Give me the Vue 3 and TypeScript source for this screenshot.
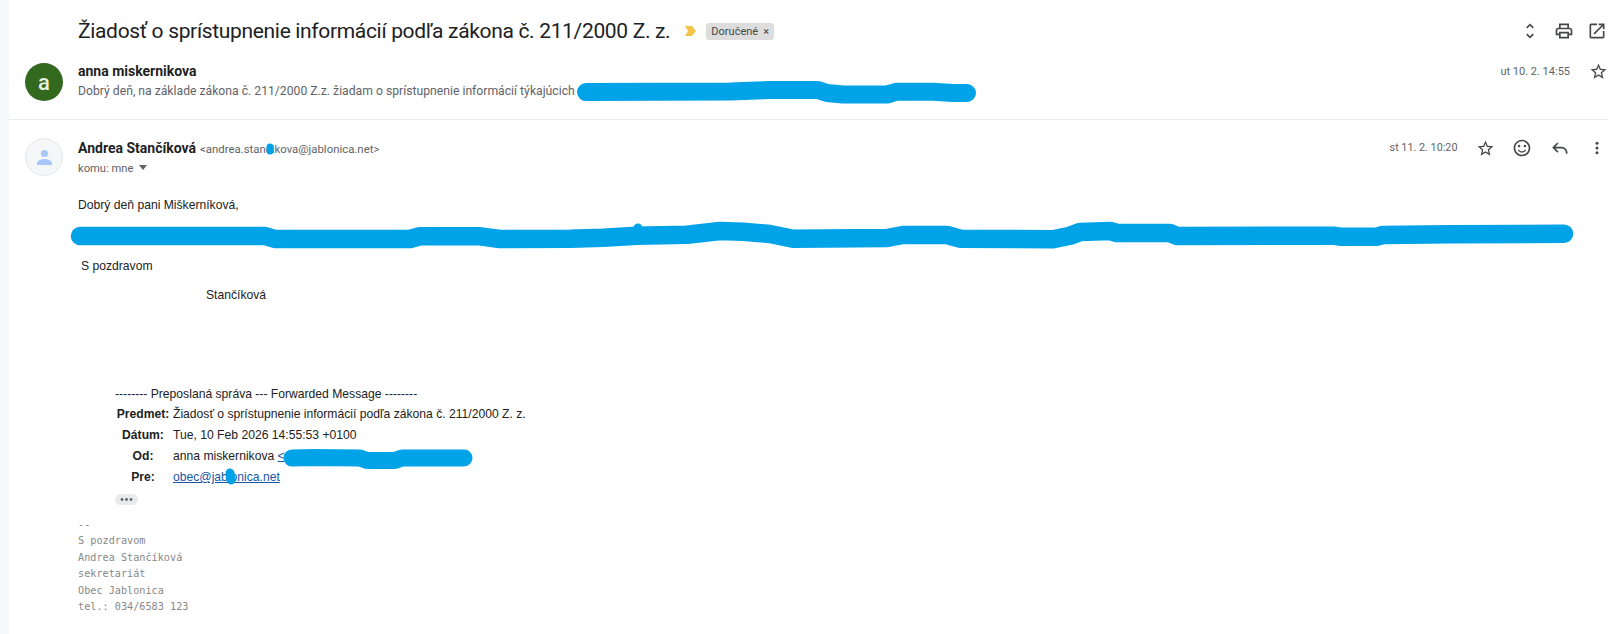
<script setup lang="ts">
// Scribbles that hide private text in the screenshot, in page coordinates
const scribbles: { d: string; w: number }[] = [
  { w: 18, d: 'M586 92L730 91.5L770 90L818 90L827 93L843 94.5L887 94.5L897 91.7L933 91.7L953 93L967 93' },
  {
    w: 18.5,
    d: 'M80 236L265 236L275 239L410 239L420 236.3L480 236.3L500 239L570 238.7L603 237.7L637 235.7L687 234.7L720 231L743 231.7L770 234L793 238.7L887 238L903 235L947 235L960 238.7L1053 239.3L1070 235.7L1080 232L1110 231L1117 233L1170 233L1177 236L1297 235.7L1333 235.7L1340 236.7L1377 236.7L1383 235L1450 234.3L1564 233.7',
  },
  { w: 9, d: 'M638 228L638 231' },
  { w: 17, d: 'M292 458L315 457.5L360 458L367 460.5L395 460.5L402 458L464 458' },
  { w: 9, d: 'M230 473L231 480' },
  { w: 7, d: 'M270 147L270 151' },
]

const forwardRows = [
  { label: 'Predmet:', value: 'Žiadosť o sprístupnenie informácií podľa zákona č. 211/2000 Z. z.' },
  { label: 'Dátum:', value: 'Tue, 10 Feb 2026 14:55:53 +0100' },
]

const signature = ['--', 'S pozdravom', 'Andrea Stančíková', 'sekretariát', 'Obec Jablonica', 'tel.: 034/6583 123']

const star =
  'M22 9.24l-7.19-.62L12 2 9.19 8.63 2 9.24l5.46 4.73L5.82 21 12 17.27 18.18 21l-1.63-7.03L22 9.24zM12 15.4l-3.76 2.27 1-4.28-3.32-2.88 4.38-.38L12 6.1l1.71 4.04 4.38.38-3.32 2.88 1 4.28L12 15.4z'
</script>

<template>
  <div class="page">
    <div class="strip"></div>
    <main class="mail">
      <header class="subject">
        <h1>Žiadosť o sprístupnenie informácií podľa zákona č. 211/2000 Z. z.</h1>
        <svg class="marker" width="11" height="10" viewBox="0 0 11 10"><path d="M0 0h7l4 5-4 5H0l3-5z" /></svg>
        <span class="label">Doručené<i>×</i></span>
        <div class="subject-tools">
          <svg width="20" height="20" viewBox="0 0 24 24"><path d="M12 5.83L15.17 9l1.41-1.41L12 3 7.41 7.59 8.83 9 12 5.83zm0 12.34L8.83 15l-1.41 1.41L12 21l4.59-4.59L15.17 15 12 18.17z" /></svg>
          <svg width="20" height="20" viewBox="0 0 24 24"><path d="M19 8h-1V3H6v5H5c-1.66 0-3 1.34-3 3v6h4v4h12v-4h4v-6c0-1.66-1.34-3-3-3zM8 5h8v3H8V5zm8 12v2H8v-4h8v2zm2-2v-2H6v2H4v-4c0-.55.45-1 1-1h14c.55 0 1 .45 1 1v4h-2z" /></svg>
          <svg width="20" height="20" viewBox="0 0 24 24"><path d="M19 19H5V5h7V3H5c-1.11 0-2 .9-2 2v14c0 1.1.89 2 2 2h14c1.1 0 2-.9 2-2v-7h-2v7zM14 3v2h3.59l-9.83 9.83 1.41 1.41L19 6.41V10h2V3h-7z" /></svg>
        </div>
      </header>

      <section class="collapsed">
        <div class="avatar avatar--green">a</div>
        <div class="collapsed-text">
          <div class="sender">anna miskernikova</div>
          <div class="snippet">Dobrý deň, na základe zákona č. 211/2000 Z.z. žiadam o sprístupnenie informácií týkajúcich</div>
        </div>
        <time class="date date--first">ut 10. 2. 14:55</time>
        <svg class="star star--first" width="19" height="19" viewBox="0 0 24 24"><path :d="star" /></svg>
      </section>

      <section class="message">
        <div class="message-head">
          <div class="avatar avatar--blank">
            <svg width="17" height="17" viewBox="0 0 17 17">
              <circle cx="8.5" cy="4.5" r="3.6" />
              <path d="M1 16v-1.6C1 11.6 5 10 8.5 10s7.5 1.6 7.5 4.4V16z" />
            </svg>
          </div>
          <div class="head-text">
            <div><span class="sender">Andrea Stančíková</span> <span class="address">&lt;andrea.stancikova@jablonica.net&gt;</span></div>
            <div class="to">komu: mne <span class="caret"></span></div>
          </div>
          <time class="date">st 11. 2. 10:20</time>
          <div class="message-tools">
            <svg width="19" height="19" viewBox="0 0 24 24"><path :d="star" /></svg>
            <svg width="20" height="20" viewBox="0 0 24 24">
              <path d="M11.99 2C6.47 2 2 6.48 2 12s4.47 10 9.99 10C17.52 22 22 17.52 22 12S17.52 2 11.99 2zM12 20c-4.42 0-8-3.58-8-8s3.58-8 8-8 8 3.58 8 8-3.58 8-8 8z" />
              <circle cx="15.5" cy="9.5" r="1.5" />
              <circle cx="8.5" cy="9.5" r="1.5" />
              <path d="M12 16c-1.48 0-2.75-.81-3.45-2H6.88c.8 2.05 2.79 3.5 5.12 3.5s4.32-1.45 5.12-3.5h-1.67c-.69 1.19-1.97 2-3.45 2z" />
            </svg>
            <svg width="20" height="20" viewBox="0 0 24 24"><path class="line" d="M9.5 6L4 11.5 9.5 17M4.5 11.5H14a6 6 0 0 1 6 6V19" /></svg>
            <svg width="20" height="20" viewBox="0 0 20 20">
              <circle cx="10" cy="5.2" r="1.5" />
              <circle cx="10" cy="10" r="1.5" />
              <circle cx="10" cy="14.8" r="1.5" />
            </svg>
          </div>
        </div>

        <div class="body">
          <p class="greeting">Dobrý deň pani Miškerníková,</p>
          <p class="regards">S pozdravom</p>
          <p class="signed">Stančíková</p>

          <div class="forward">
            <div class="forward-title">-------- Preposlaná správa --- Forwarded Message --------</div>
            <div v-for="row in forwardRows" :key="row.label" class="forward-row">
              <b>{{ row.label }}</b><span>{{ row.value }}</span>
            </div>
            <div class="forward-row">
              <b>Od:</b><span>anna miskernikova <a>&lt;</a></span>
            </div>
            <div class="forward-row">
              <b>Pre:</b><span><a>obec@jablonica.net</a></span>
            </div>
            <div class="more">
              <svg width="13" height="5" viewBox="0 0 13 5">
                <circle cx="2" cy="2.5" r="1.4" />
                <circle cx="6.5" cy="2.5" r="1.4" />
                <circle cx="11" cy="2.5" r="1.4" />
              </svg>
            </div>
          </div>

          <pre class="signature"><template v-for="line in signature" :key="line">{{ line }}
</template></pre>
        </div>
      </section>
    </main>

    <svg class="scribbles" width="1622" height="634" viewBox="0 0 1622 634">
      <path v-for="(s, i) in scribbles" :key="i" :d="s.d" :stroke-width="s.w" />
    </svg>
  </div>
</template>

<style scoped>
.page {
  position: relative;
  display: flex;
  height: 634px;
  overflow: hidden;
  background: #fff;
  color: #202124;
  font-family: Roboto, "Liberation Sans", sans-serif;
}

.strip {
  width: 9px;
  flex: none;
  background: #f6f8fc;
}

.mail {
  flex: 1;
  min-width: 0;
  padding-right: 14px;
}

svg {
  display: block;
  flex: none;
  fill: #444746;
}

.line {
  fill: none;
  stroke: #444746;
  stroke-width: 2;
}

.subject {
  display: flex;
  align-items: center;
  height: 62px;
  padding-left: 69px;
}

.subject h1 {
  margin: 0;
  font-size: 21px;
  font-weight: 400;
  letter-spacing: -0.33px;
  white-space: nowrap;
}

.marker {
  margin-left: 15px;
  fill: #f2c649;
}

.label {
  margin-left: 10px;
  padding: 0 5px;
  height: 17px;
  line-height: 17px;
  border-radius: 3px;
  background: #dddddd;
  color: #444746;
  font-size: 11px;
  white-space: nowrap;
}

.label i {
  margin-left: 5px;
  font-style: normal;
}

.subject-tools {
  display: flex;
  gap: 13.5px;
  margin-left: auto;
  margin-right: 1px;
}

.collapsed {
  display: flex;
  align-items: flex-start;
  height: 57px;
  border-bottom: 1px solid #e8eaed;
}

.avatar {
  flex: none;
  width: 38px;
  height: 38px;
  margin-left: 16px;
  border-radius: 50%;
  display: flex;
  align-items: center;
  justify-content: center;
}

.avatar--green {
  margin-top: 1px;
  background: #33691e;
  color: #e8efe4;
  font-size: 22px;
  font-weight: 500;
}

.avatar--blank {
  box-sizing: border-box;
  background: #f5f6f8;
  border: 1px solid #e6e7ea;
}

.avatar--blank svg {
  fill: #a8c7fa;
}

.collapsed-text {
  margin-left: 15px;
}

.sender {
  font-size: 14px;
  font-weight: 700;
  line-height: 19px;
  color: #1f1f1f;
}

.snippet {
  margin-top: 1px;
  font-size: 12.2px;
  line-height: 19px;
  color: #5f6368;
  white-space: nowrap;
}

.date {
  margin-left: auto;
  font-size: 10.8px;
  line-height: 19px;
  color: #5f6368;
  white-space: nowrap;
}

.date--first {
  font-size: 11px;
  margin-right: 19px;
}

.star--first {
  margin-right: 0;
}

.message {
  display: block;
}

.message-head {
  display: flex;
  align-items: flex-start;
  padding-top: 18px;
}

.head-text {
  margin-left: 15px;
}

.head-text .sender {
  display: inline;
}

.head-text > div:first-child {
  line-height: 19px;
}

.address {
  font-size: 11.4px;
  color: #5f6368;
}

.to {
  font-size: 11.2px;
  line-height: 19px;
  color: #5f6368;
  white-space: nowrap;
}

.caret {
  display: inline-block;
  width: 0;
  height: 0;
  margin-left: 3px;
  vertical-align: 2px;
  border-left: 4px solid transparent;
  border-right: 4px solid transparent;
  border-top: 5px solid #5f6368;
}

.message-tools {
  display: flex;
  align-items: center;
  gap: 17.5px;
  margin-left: 18px;
  margin-right: 1px;
}

.body {
  padding-left: 69px;
  font-family: "Liberation Sans", Arial, sans-serif;
  font-size: 12.15px;
  color: #222;
}

.body p {
  margin: 0;
  line-height: 16px;
}

.greeting {
  padding-top: 19px;
}

.regards {
  padding-top: 45px;
  padding-left: 3px;
}

.signed {
  padding-top: 13px;
  padding-left: 128px;
}

.forward {
  padding-top: 81px;
  padding-left: 37px;
}

.forward-title {
  line-height: 20px;
}

.forward-row {
  display: flex;
  line-height: 21px;
}

.forward-row b {
  flex: none;
  width: 56px;
  text-align: center;
}

.forward-row span {
  margin-left: 2px;
}

.forward-row a {
  color: #1a56a8;
  text-decoration: underline;
}

.more {
  display: flex;
  align-items: center;
  justify-content: center;
  width: 23px;
  height: 11px;
  margin-top: 6px;
  border-radius: 6px;
  background: #e8eaed;
}

.more svg {
  fill: #5f6368;
}

.signature {
  margin: 11.5px 0 0;
  font-family: "DejaVu Sans Mono", "Liberation Mono", monospace;
  font-size: 10.2px;
  line-height: 16.6px;
  color: #888;
}

.scribbles {
  position: absolute;
  left: 0;
  top: 0;
  fill: none;
  pointer-events: none;
}

.scribbles path {
  fill: none;
  stroke: #00a2e8;
  stroke-linecap: round;
  stroke-linejoin: round;
}
</style>
